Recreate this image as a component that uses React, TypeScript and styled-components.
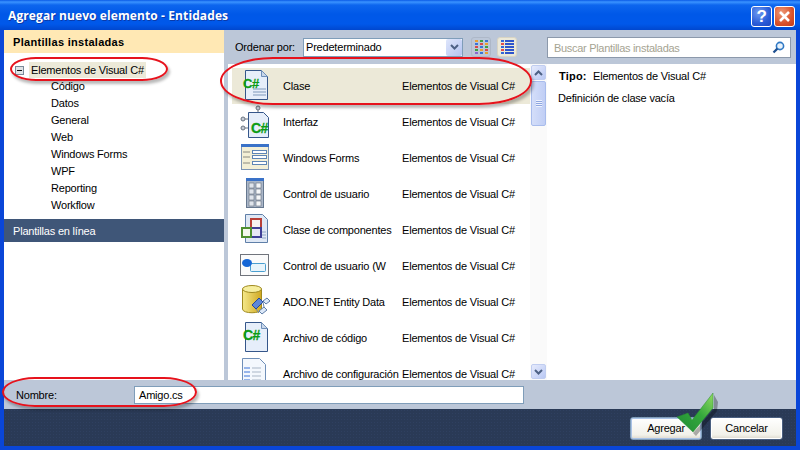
import * as React from 'react'
import styled, { createGlobalStyle } from 'styled-components'

const uiFont = `"Liberation Sans", Arial, sans-serif`

const treeChildren = ['Código', 'Datos', 'General', 'Web', 'Windows Forms', 'WPF', 'Reporting', 'Workflow']

type IconKind = 'class' | 'interface' | 'forms' | 'user' | 'component' | 'webuser' | 'ado' | 'code' | 'config'

const templates: { name: string; icon: IconKind }[] = [
    { name: 'Clase', icon: 'class' },
    { name: 'Interfaz', icon: 'interface' },
    { name: 'Windows Forms', icon: 'forms' },
    { name: 'Control de usuario', icon: 'user' },
    { name: 'Clase de componentes', icon: 'component' },
    { name: 'Control de usuario (W', icon: 'webuser' },
    { name: 'ADO.NET Entity Data', icon: 'ado' },
    { name: 'Archivo de código', icon: 'code' },
    { name: 'Archivo de configuración', icon: 'config' },
]

const Page = ({ lines }: { lines?: boolean }) => (
    <>
        <path d="M5.5 1.5h16l6 6v23h-22z" fill="#e6eefa" stroke="#35568a" />
        <path d="M21.5 1.5v6h6z" fill="#c9d7ea" stroke="#6f8fb8" />
        {lines && <path d="M13 20h13M13 23h13M13 26h13" stroke="#7f98ba" />}
    </>
)

const Sharp = ({ x, y, size = 13 }: { x: number; y: number; size?: number }) => (
    <text x={x} y={y} fontFamily={uiFont} fontWeight="700" fontSize={size} letterSpacing="-.5" fill="#0c9c14" stroke="#0c9c14" strokeWidth=".3">
        C#
    </text>
)

const TemplateIcon = ({ kind }: { kind: IconKind }) => {
    switch (kind) {
        case 'class':
            return (
                <svg width="34" height="34" viewBox="0 0 34 34">
                    <Page lines />
                    <Sharp x={3} y={19} />
                </svg>
            )
        case 'interface':
            return (
                <svg width="34" height="34" viewBox="0 0 34 34">
                    <path d="M18 5v5M5 14h5M5 23h5" stroke="#6a7480" />
                    <circle cx="18" cy="3" r="2" fill="#c6ccd6" stroke="#6a7480" />
                    <circle cx="3" cy="14" r="2" fill="#c6ccd6" stroke="#6a7480" />
                    <circle cx="3" cy="23" r="2" fill="#c6ccd6" stroke="#6a7480" />
                    <path d="M8.5 7.5h15l5 5v20h-20z" fill="#e6eefa" stroke="#35568a" />
                    <Sharp x={11} y={28} size={14} />
                </svg>
            )
        case 'forms':
            return (
                <svg width="34" height="34" viewBox="0 0 34 34">
                    <rect x="1.5" y="3.5" width="27" height="25" fill="#f3efd6" stroke="#7d95b5" />
                    <rect x="1" y="3" width="28" height="3" fill="#3a72c8" />
                    <path d="M3 11h7M3 16h7M3 22h7" stroke="#8a8a80" />
                    <rect x="12.5" y="9.5" width="14" height="3" fill="#fff" stroke="#5f86b5" />
                    <rect x="12.5" y="14.5" width="14" height="3" fill="#fff" stroke="#5f86b5" />
                    <rect x="12.5" y="20.5" width="14" height="3" fill="#fff" stroke="#5f86b5" />
                </svg>
            )
        case 'user':
            return (
                <svg width="34" height="34" viewBox="0 0 34 34">
                    <rect x="6.5" y="1.5" width="17" height="29" fill="#aab6c8" stroke="#66788f" />
                    <rect x="6" y="1" width="18" height="3" fill="#3a72c8" />
                    {[6, 12, 18, 24].map(y => (
                        <g key={y}>
                            <rect x="9" y={y} width="5" height="5" fill="#dfe4ec" stroke="#66707e" strokeWidth=".6" />
                            <rect x="16" y={y} width="5" height="5" fill="#f4f6f8" stroke="#66707e" strokeWidth=".6" />
                        </g>
                    ))}
                </svg>
            )
        case 'component':
            return (
                <svg width="34" height="34" viewBox="0 0 34 34">
                    <path d="M5.5 1.5h17l5 5v23h-22z" fill="#dfe8f5" stroke="#5f7fa8" />
                    <path d="M22 19h4M22 22h4M22 25h4" stroke="#8ea6c4" />
                    <rect x="11" y="6" width="10" height="9" fill="#f6f2f0" stroke="#b84038" strokeWidth="2" />
                    <rect x="11" y="15" width="10" height="9" fill="#e8e8f4" stroke="#3e3f96" strokeWidth="2" />
                    <rect x="2" y="15" width="9" height="9" fill="#f4f8ee" stroke="#4f9030" strokeWidth="2" />
                </svg>
            )
        case 'webuser':
            return (
                <svg width="34" height="34" viewBox="0 0 34 34">
                    <rect x="0.5" y="5.5" width="28" height="21" fill="#fbfbfb" stroke="#70747c" />
                    <rect x="10.5" y="14.5" width="15" height="8" rx="1" fill="#e8f4fb" stroke="#4a9fd0" />
                    <ellipse cx="7" cy="14" rx="5" ry="4" fill="#1566d6" />
                </svg>
            )
        case 'ado':
            return (
                <svg width="34" height="34" viewBox="0 0 34 34">
                    <defs>
                        <linearGradient id="barrel" x1="0" y1="0" x2="1" y2="0">
                            <stop offset="0" stopColor="#f4e88a" />
                            <stop offset="1" stopColor="#d0a820" />
                        </linearGradient>
                    </defs>
                    <path d="M2.5 4v20c0 5 19 5 19 0V4z" fill="url(#barrel)" stroke="#a08a20" />
                    <ellipse cx="12" cy="4" rx="9.5" ry="3.5" fill="#f6ee9e" stroke="#a08a20" />
                    <path d="M12 20l7-7 4 4-7 7z" fill="#5f88d8" stroke="#24489c" />
                    <path d="M23 16l4-3 3 3-4 3zM19 26l5-4 3 3-5 4z" fill="#dce8f8" stroke="#5f7ea8" />
                    <path d="M16 24l3 4M23 17l1 5" stroke="#6f87a8" />
                </svg>
            )
        case 'code':
            return (
                <svg width="34" height="34" viewBox="0 0 34 34">
                    <Page />
                    <Sharp x={3} y={19} size={14} />
                </svg>
            )
        case 'config':
            return (
                <svg width="34" height="34" viewBox="0 0 34 34">
                    <path d="M2.5 1.5h17l6 6v26h-23z" fill="#f4f8fd" stroke="#6f8fb8" />
                    <path d="M4 11h6M4 15h6M4 19h6M4 23h6" stroke="#3a72d8" />
                    <path d="M12 11h9M12 15h9M12 19h9M12 23h9" stroke="#a9b6c6" />
                </svg>
            )
    }
}

const Chevron = ({ up }: { up?: boolean }) => (
    <svg width="9" height="6" viewBox="0 0 9 6">
        <path d={up ? 'M1 5l3.5-3.5L8 5' : 'M1 1l3.5 3.5L8 1'} fill="none" stroke="#4d6185" strokeWidth="2" />
    </svg>
)

const ViewIcon = ({ colored }: { colored?: boolean }) => (
    <svg width="13" height="15" viewBox="0 0 13 15">
        {[0, 1, 2, 3, 4].map(r =>
            colored ? (
                <g key={r}>
                    <rect x="0" y={r * 3} width="3" height="2" fill={r % 2 ? '#e24b4b' : '#3465d8'} />
                    <rect x="4" y={r * 3} width="9" height="2" fill="#2f55cc" />
                </g>
            ) : (
                <g key={r}>
                    <rect x="0" y={r * 3} width="3" height="2" fill={['#e8a030', '#3a72d8', '#d84a4a', '#40a040', '#8a6ad0'][r]} />
                    <rect x="5" y={r * 3} width="3" height="2" fill={['#40a040', '#d84a4a', '#3a72d8', '#e8a030', '#3a72d8'][r]} />
                    <rect x="10" y={r * 3} width="3" height="2" fill={['#3a72d8', '#e8a030', '#40a040', '#d84a4a', '#e8a030'][r]} />
                </g>
            ),
        )}
    </svg>
)

export default function App() {
    return (
        <Dialog>
            <GlobalStyle />
            <TitleBar>
                <TitleText>Agregar nuevo elemento - Entidades</TitleText>
                <CaptionButtons>
                    <CaptionButton>?</CaptionButton>
                    <CaptionButton $close>
                        <svg width="13" height="13" viewBox="0 0 13 13">
                            <path d="M2 2l9 9M11 2l-9 9" stroke="#fff" strokeWidth="2.6" />
                        </svg>
                    </CaptionButton>
                </CaptionButtons>
            </TitleBar>
            <Client>
                <Columns>
                    <LeftPanel>
                        <PanelHeader>Plantillas instaladas</PanelHeader>
                        <Tree>
                            <TreeRoot>
                                <Expander />
                                <TreeRootLabel>Elementos de Visual C#</TreeRootLabel>
                            </TreeRoot>
                            {treeChildren.map(item => (
                                <TreeItem key={item}>{item}</TreeItem>
                            ))}
                        </Tree>
                        <OnlineBar>Plantillas en línea</OnlineBar>
                    </LeftPanel>
                    <Middle>
                        <Toolbar>
                            <SortLabel>Ordenar por:</SortLabel>
                            <Combo>
                                <span>Predeterminado</span>
                                <ComboButton>
                                    <Chevron />
                                </ComboButton>
                            </Combo>
                            <ViewToggle>
                                <ViewIcon />
                            </ViewToggle>
                            <ViewToggle $active>
                                <ViewIcon colored />
                            </ViewToggle>
                        </Toolbar>
                        <ListArea>
                            <List>
                                {templates.map((t, i) => (
                                    <Row key={t.name} $selected={i === 0}>
                                        <IconCell>
                                            <TemplateIcon kind={t.icon} />
                                        </IconCell>
                                        <NameCell>{t.name}</NameCell>
                                        <TypeCell>Elementos de Visual C#</TypeCell>
                                    </Row>
                                ))}
                            </List>
                            <ScrollBar>
                                <ScrollButton>
                                    <Chevron up />
                                </ScrollButton>
                                <ScrollTrack>
                                    <ScrollThumb>
                                        <Grip />
                                    </ScrollThumb>
                                </ScrollTrack>
                                <ScrollButton>
                                    <Chevron />
                                </ScrollButton>
                            </ScrollBar>
                        </ListArea>
                    </Middle>
                    <RightPanel>
                        <SearchStrip>
                            <SearchBox>
                                <span>Buscar Plantillas instaladas</span>
                                <svg width="13" height="13" viewBox="0 0 13 13">
                                    <circle cx="8" cy="5" r="3.6" fill="#e8f2fb" stroke="#2f78c4" strokeWidth="1.6" />
                                    <path d="M5.4 7.6L1.5 11.5" stroke="#1d4f90" strokeWidth="2.2" />
                                </svg>
                            </SearchBox>
                        </SearchStrip>
                        <Details>
                            <DetailType>
                                <b>Tipo:</b>
                                <span>Elementos de Visual C#</span>
                            </DetailType>
                            <DetailText>Definición de clase vacía</DetailText>
                        </Details>
                    </RightPanel>
                </Columns>
                <NameRow>
                    <NameLabel>Nombre:</NameLabel>
                    <NameInput>Amigo.cs</NameInput>
                </NameRow>
                <Footer>
                    <FooterButton $default>Agregar</FooterButton>
                    <FooterButton>Cancelar</FooterButton>
                </Footer>
            </Client>
            <Ring $x={10} $y={57} $w={158} $h={24} />
            <Ring $x={220} $y={57} $w={312} $h={48} />
            <Ring $x={2} $y={377} $w={195} $h={30} />
            <CheckMark viewBox="0 0 44 46" width="44" height="46">
                <defs>
                    <linearGradient id="check" x1="0" y1="1" x2="1" y2="0">
                        <stop offset="0" stopColor="#1f8a35" />
                        <stop offset=".55" stopColor="#34a83c" />
                        <stop offset="1" stopColor="#93dc62" />
                    </linearGradient>
                </defs>
                <path d="M17 41L38 17 38 3 42 10 41 19 20 44z" fill="#000" opacity=".3" />
                <path d="M1 25l11-4 4 7L37 1v15L17 40z" fill="url(#check)" stroke="#2a8a30" strokeWidth=".5" />
            </CheckMark>
        </Dialog>
    )
}

const GlobalStyle = createGlobalStyle`
    html, body {
        margin: 0;
        padding: 0;
        background: #0a4fd8;
    }

    * {
        box-sizing: border-box;
    }
`

const Dialog = styled.div`
    position: relative;
    width: 800px;
    height: 450px;
    display: flex;
    flex-direction: column;
    overflow: hidden;
    font-family: ${uiFont};
    font-size: 11px;
    letter-spacing: -0.2px;
    color: #000;
    background: #0a46d8;

    b {
        letter-spacing: 0.2px;
    }
`

const TitleBar = styled.div`
    height: 30px;
    flex: none;
    display: flex;
    align-items: center;
    justify-content: space-between;
    padding: 0 5px 0 8px;
    background: linear-gradient(180deg, #0a5ae6 0, #3a93ff 2px, #0d66ee 5px, #0058e8 14px, #0058ea 24px, #0047cf 30px);
`

const TitleText = styled.div`
    color: #fff;
    font-family: "Open Sans", "Liberation Sans", sans-serif;
    font-weight: 700;
    font-size: 12px;
    letter-spacing: 0.1px;
    text-shadow: 1px 1px 0 #0b3aa8;
`

const CaptionButtons = styled.div`
    display: flex;
    gap: 2px;
    margin-top: 3px;
`

const CaptionButton = styled.div<{ $close?: boolean }>`
    width: 21px;
    height: 21px;
    display: flex;
    align-items: center;
    justify-content: center;
    border: 1px solid #fff;
    border-radius: 3px;
    color: #fff;
    font-size: 17px;
    font-weight: 700;
    background: ${p =>
        p.$close
            ? 'radial-gradient(circle at 35% 30%, #ee9a78, #d9512a 60%, #c23c1a)'
            : 'radial-gradient(circle at 35% 30%, #6f9af0, #2a5cd8 60%, #1c47c0)'};
`

const Client = styled.div`
    flex: 1;
    display: flex;
    flex-direction: column;
    margin: 0 4px 4px;
    background: #bcc7d8;
`

const Columns = styled.div`
    height: 350px;
    display: flex;
`

const LeftPanel = styled.div`
    width: 220px;
    flex: none;
    background: #fff;
`

const PanelHeader = styled.div`
    height: 23px;
    padding-left: 9px;
    display: flex;
    align-items: center;
    font-weight: 700;
    letter-spacing: 0.3px;
    background: #ffe8b4;
`

const Tree = styled.div`
    height: 166px;
    padding-top: 9px;
`

const TreeRoot = styled.div`
    height: 16px;
    display: flex;
    align-items: center;
    padding-left: 11px;
`

const Expander = styled.div`
    position: relative;
    width: 9px;
    height: 9px;
    flex: none;
    border: 1px solid #7a8a99;
    background: #dfe3e6;

    &::after {
        content: '';
        position: absolute;
        left: 1px;
        top: 3px;
        width: 5px;
        height: 1px;
        background: #111;
    }
`

const TreeRootLabel = styled.div`
    margin-left: 5px;
    width: 117px;
    height: 16px;
    line-height: 16px;
    padding-left: 2px;
    white-space: nowrap;
    background: #ece9d8;
`

const TreeItem = styled.div`
    height: 17px;
    line-height: 17px;
    padding-left: 47px;
`

const OnlineBar = styled.div`
    height: 23px;
    display: flex;
    align-items: center;
    padding-left: 9px;
    color: #fff;
    background: #3f5678;
`

const Middle = styled.div`
    width: 323px;
    flex: none;
    display: flex;
    flex-direction: column;
`

const Toolbar = styled.div`
    height: 34px;
    flex: none;
    display: flex;
    align-items: center;
    padding: 0 0 0 11px;
`

const SortLabel = styled.div`
    width: 68px;
    flex: none;
`

const Combo = styled.div`
    width: 160px;
    height: 19px;
    flex: none;
    display: flex;
    align-items: center;
    justify-content: space-between;
    padding-left: 2px;
    border: 1px solid #7f9db9;
    background: #fff;
`

const ComboButton = styled.div`
    width: 16px;
    height: 17px;
    display: flex;
    align-items: center;
    justify-content: center;
    border-radius: 2px;
    background: linear-gradient(135deg, #dfe6fb, #b4c4f2);
`

const ViewToggle = styled.div<{ $active?: boolean }>`
    width: 20px;
    height: 20px;
    flex: none;
    margin-left: ${p => (p.$active ? '6px' : '8px')};
    display: flex;
    align-items: center;
    justify-content: center;
    border: 1px solid ${p => (p.$active ? '#d8d4c4' : '#aeb8c8')};
    border-radius: 3px;
    background: ${p => (p.$active ? '#ece9d8' : 'transparent')};
`

const ListArea = styled.div`
    height: 316px;
    display: flex;
    margin-left: 4px;
`

const List = styled.div`
    flex: 1;
    min-width: 0;
    padding-top: 4px;
    overflow: hidden;
    background: #fff;
`

const Row = styled.div<{ $selected?: boolean }>`
    height: 36px;
    margin-left: 4px;
    display: flex;
    align-items: center;
    background: ${p => (p.$selected ? '#ece9d8' : 'transparent')};
`

const IconCell = styled.div`
    width: 51px;
    flex: none;
    padding-left: 8px;
    display: flex;
    align-items: center;
`

const NameCell = styled.div`
    width: 119px;
    flex: none;
    white-space: nowrap;
`

const TypeCell = styled.div`
    white-space: nowrap;
`

const ScrollBar = styled.div`
    width: 17px;
    flex: none;
    display: flex;
    flex-direction: column;
    padding: 1px 1px;
    background: #fafafa;
`

const ScrollButton = styled.div`
    height: 15px;
    flex: none;
    display: flex;
    align-items: center;
    justify-content: center;
    border: 1px solid #c0cdf0;
    border-radius: 2px;
    background: linear-gradient(135deg, #e6ebfc, #b9c8f4);
`

const ScrollTrack = styled.div`
    flex: 1;
    padding-top: 1px;
`

const ScrollThumb = styled.div`
    height: 45px;
    display: flex;
    align-items: center;
    justify-content: center;
    border: 1px solid #a8bcec;
    border-radius: 2px;
    background: linear-gradient(90deg, #d4def9, #c0cef5);
`

const Grip = styled.div`
    width: 6px;
    height: 7px;
    background: repeating-linear-gradient(180deg, #eef2fd 0, #eef2fd 1px, #8ea6e0 1px, #8ea6e0 2px);
`

const RightPanel = styled.div`
    flex: 1;
    min-width: 0;
    display: flex;
    flex-direction: column;
`

const SearchStrip = styled.div`
    height: 34px;
    flex: none;
    padding: 7px 5px 0 0;
`

const SearchBox = styled.div`
    height: 21px;
    display: flex;
    align-items: center;
    justify-content: space-between;
    padding: 0 5px 0 6px;
    letter-spacing: -0.3px;
    color: #a5a392;
    border: 1px solid #8c99ab;
    background: #fff;
`

const Details = styled.div`
    flex: 1;
    padding: 5px 11px;
    background: #fff;
`

const DetailType = styled.div`
    height: 14px;
    line-height: 14px;
    display: flex;
    padding-left: 1px;

    b {
        width: 34px;
    }
`

const DetailText = styled.div`
    margin-top: 8px;
    line-height: 14px;
`

const NameRow = styled.div`
    height: 29px;
    flex: none;
    display: flex;
    align-items: center;
`

const NameLabel = styled.div`
    width: 130px;
    flex: none;
    padding-left: 12px;
`

const NameInput = styled.div`
    width: 390px;
    height: 18px;
    line-height: 16px;
    padding-left: 4px;
    border: 1px solid #7f9db9;
    background: #fff;
`

const Footer = styled.div`
    flex: 1;
    display: flex;
    align-items: center;
    justify-content: flex-end;
    gap: 8px;
    padding: 1px 13px 0 0;
    background-color: #2a3a56;
    background-image: radial-gradient(#2f4060 0.7px, transparent 0.8px);
    background-size: 3px 3px;
`

const FooterButton = styled.div<{ $default?: boolean }>`
    width: ${p => (p.$default ? '72px' : '73px')};
    height: 23px;
    display: flex;
    align-items: center;
    justify-content: center;
    font-size: 11px;
    border: 1px solid ${p => (p.$default ? '#7f9db9' : '#4a5f80')};
    border-radius: 3px;
    box-shadow: inset 0 0 0 1px ${p => (p.$default ? '#a9c2e6' : '#fff')};
    background: linear-gradient(180deg, #fff, #f2f1ea 80%, #dcd8cc);
`

const Ring = styled.div<{ $x: number; $y: number; $w: number; $h: number }>`
    position: absolute;
    left: ${p => p.$x}px;
    top: ${p => p.$y}px;
    width: ${p => p.$w}px;
    height: ${p => p.$h}px;
    border: 2px solid #e6121c;
    border-radius: ${p => Math.round(p.$h * 1.1)}px / 50%;
    box-shadow: 2px 3px 3px rgba(0, 0, 0, 0.28);
    pointer-events: none;
`

const CheckMark = styled.svg`
    position: absolute;
    left: 676px;
    top: 392px;
`
